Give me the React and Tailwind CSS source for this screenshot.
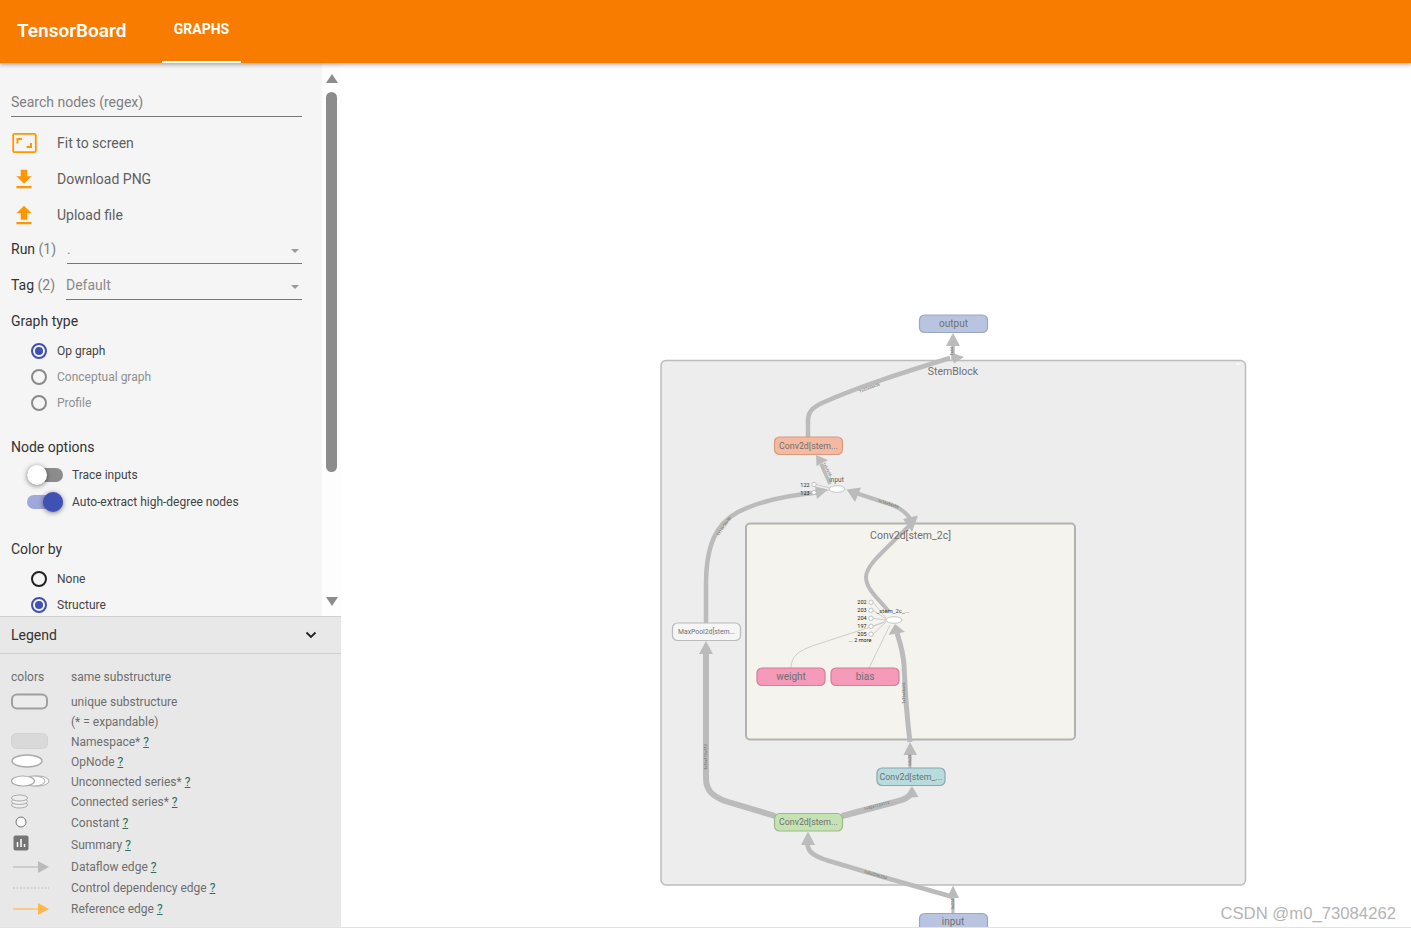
import React from "react";

const font = { fontFamily: "Roboto, sans-serif" };

function Radio({ label, checked, dark, muted, className = "" }) {
  const ring = checked ? "border-[#3f51b5]" : dark ? "border-[#222222]" : "border-[#8a8a8a]";
  return (
    <div className={"flex items-center h-[26px] pl-[20px] " + className}>
      <span className={"w-4 h-4 rounded-full border-2 flex items-center justify-center " + ring}>
        {checked && <span className="w-2 h-2 rounded-full bg-[#3f51b5]" />}
      </span>
      <span className={"ml-[10px] text-xs " + (muted ? "text-[#8f8f8f]" : "text-[#444444]")}>{label}</span>
    </div>
  );
}

function Toggle({ label, on }) {
  return (
    <div className="flex items-center h-[27px] pl-[16px]">
      <span className={"relative w-9 h-[14px] rounded-full " + (on ? "bg-[#9fa8da]" : "bg-[#8c8c8c]")}>
        <span className={"absolute top-[-3px] w-5 h-5 rounded-full shadow-[0_1px_5px_rgba(0,0,0,0.5)] " + (on ? "left-4 bg-[#3f51b5]" : "left-0 bg-white")} />
      </span>
      <span className="ml-[9px] text-xs text-[#444444]">{label}</span>
    </div>
  );
}

function Caret() {
  return <span className="absolute right-[3px] top-[13px] w-0 h-0 border-x-[4px] border-x-transparent border-t-[4px] border-t-[#9a9a9a]" />;
}

function Select({ name, count, value, widthClass }) {
  return (
    <div className="flex items-start h-9">
      <span className="mt-[6px] text-sm text-[#333333] whitespace-nowrap">{name} <span className="text-[#808080]">({count})</span></span>
      <div className={"relative ml-auto mt-[3px] h-[28px] border-b border-[#777777] text-sm text-[#8a8a8a] pt-[3px] " + widthClass}>
        {value}
        <Caret />
      </div>
    </div>
  );
}

function ActionRow({ icon, label }) {
  return (
    <div className="flex items-center h-9">
      <span className="w-[26px] mr-[20px] flex justify-center">{icon}</span>
      <span className="text-sm text-[#5f5f5f]">{label}</span>
    </div>
  );
}

const Q = () => <span className="underline text-[#2f6f57]">?</span>;

function LegendRow({ icon, children, className = "" }) {
  return (
    <div className={"flex items-center h-5 " + className}>
      <span className="w-[60px] h-5 flex items-center shrink-0">{icon}</span>
      <span className="text-xs text-[#6e6e6e]">{children}</span>
    </div>
  );
}

const S = ({ children }) => <svg width="40" height="20" viewBox="0 0 40 20" className="overflow-visible">{children}</svg>;

function Node({ x, y, w = 68, h = 17.5, fill, stroke, text, size = 9, color = "#707070" }) {
  return (
    <g>
      <rect x={x} y={y} width={w} height={h} rx="5" fill={fill} stroke={stroke} strokeWidth="1.2" />
      <text x={x + w / 2} y={y + h / 2 + size * 0.35} textAnchor="middle" fontSize={size} fill={color}>{text}</text>
    </g>
  );
}

function EdgeLabel({ x, y, r, text, size = 4 }) {
  return <text x={x} y={y} textAnchor="middle" fontSize={size} fill="#666666" transform={`rotate(${r} ${x} ${y})`}>{text}</text>;
}

function Small({ cx, cy, label, lx, toX, toY }) {
  return (
    <g>
      <line x1={cx + 2} y1={cy} x2={toX} y2={toY} stroke="#c4c4c4" strokeWidth="0.8" />
      <circle cx={cx} cy={cy} r="2.2" fill="#ffffff" stroke="#aaaaaa" strokeWidth="0.7" />
      <text x={lx} y={cy + 2} textAnchor="middle" fontSize="5.5" fill="#222222">{label}</text>
    </g>
  );
}

function Graph() {
  const e = { fill: "none", stroke: "#bbbbbb", strokeLinejoin: "round" };
  return (
    <svg viewBox="341 63 1070 864" className="w-full h-full block" style={{ fontFamily: "Roboto, sans-serif" }}>
      <rect x="661" y="360.5" width="584.5" height="524.5" rx="5" fill="#ededed" stroke="#bcbcbc" strokeWidth="1.5" />
      <rect x="746" y="523.5" width="329" height="216" rx="4" fill="#f4f3ee" stroke="#b3b3ad" strokeWidth="2" />
      <line x1="1236" y1="364" x2="1240" y2="364" stroke="#ffffff" />
      <line x1="1066" y1="508" x2="1070" y2="508" stroke="#ffffff" opacity="0" />

      {/* thin reference edges */}
      <path d="M791 668 C791 655 800 651 812 646 L884 622.5" fill="none" stroke="#cfcfca" strokeWidth="1" />
      <path d="M869 668 L890 625" fill="none" stroke="#cfcfca" strokeWidth="1" />

      {/* dataflow edges */}
      <path d="M953 914 L953 897" {...e} strokeWidth="3" />
      <polygon points="953,885.5 947,898 959,898" fill="#bbbbbb" />
      <path d="M953 897 L883 877 L826 860 C812 855 807 851 807.5 842" {...e} strokeWidth="4.5" />
      <polygon points="808,831.5 801,845 815,845" fill="#bbbbbb" />
      <path d="M842 816 L895 802 C902 800 907 799 911 794" {...e} strokeWidth="6" />
      <polygon points="912,786 904.5,798 918.5,797" fill="#bbbbbb" />
      <path d="M775 816 L725 801 C712 796 706 790 706 778 L706 652" {...e} strokeWidth="6" />
      <polygon points="706,641 699,654 713,654" fill="#bbbbbb" />
      <path d="M910 768 L910 753" {...e} strokeWidth="3" />
      <polygon points="910,742 903.5,755 917,755" fill="#bbbbbb" />
      <path d="M910 742 C906 710 905 690 904 665 C903 650 899 640 897 633" {...e} strokeWidth="5" />
      <polygon points="895,624 888.5,635 905,632" fill="#bbbbbb" />
      <path d="M889 612 C880 600 866 590 866 577 C866 565 885 550 911 524" {...e} strokeWidth="4" />
      <polygon points="918,515.5 903,519 912,532" fill="#bbbbbb" />
      <path d="M912 521 C905 510 897 506 880 501 L856 493" {...e} strokeWidth="4" />
      <polygon points="846.5,489.5 861,487.5 855,502" fill="#bbbbbb" />
      <path d="M706 623 L706 585 C706 545 716 524 738 512 C760 501 790 495 818 492.5" {...e} strokeWidth="4.5" />
      <polygon points="828,489.5 815,486.5 817,499" fill="#bbbbbb" />
      <path d="M830 484 L821 464" {...e} strokeWidth="3.5" />
      <polygon points="816,455 816.5,466 828,460" fill="#bbbbbb" />
      <path d="M808 437 L808 420 C808 412 812 408 822 403 C860 386 905 372 950 358" {...e} strokeWidth="4.5" />
      <polygon points="964,357 951,352.5 954,363.5" fill="#bbbbbb" />
      <path d="M953 360 L953 345" {...e} strokeWidth="3.5" />
      <polygon points="953,333 946,346 960,346" fill="#bbbbbb" />

      {/* group titles above edges */}
      <text x="953" y="374.5" textAnchor="middle" fontSize="10.5" fill="#707070">StemBlock</text>
      <text x="910.5" y="538.5" textAnchor="middle" fontSize="10.5" fill="#707070">Conv2d[stem_2c]</text>

      {/* edge labels */}
      <EdgeLabel x="953" y="351" r={-90} text="1x64" />
      <EdgeLabel x="870" y="389" r={-20} text="1x32x56x56" />
      <EdgeLabel x="826" y="470" r={62} text="1x64x56" />
      <EdgeLabel x="888" y="505" r={18} text="1x16x56x56" />
      <EdgeLabel x="725" y="527" r={-55} text="1x16x56x56" />
      <EdgeLabel x="707" y="757" r={-90} text="1x16x112x112" />
      <EdgeLabel x="877" y="807" r={-15} text="1x32x112x112" />
      <EdgeLabel x="875" y="876" r={17} text="1x3x224x224" />
      <EdgeLabel x="954" y="904" r={-90} text="3x224" />
      <EdgeLabel x="911" y="760" r={-90} text="64x28" />
      <EdgeLabel x="905" y="693" r={-90} text="1x16x56x56" />

      {/* op nodes */}
      <Small cx={814} cy={484.5} label="122" lx={805} toX={830} toY={488} />
      <Small cx={814} cy={492.5} label="123" lx={805} toX={830} toY={490} />
      <ellipse cx="837" cy="489" rx="8" ry="3.3" fill="#ffffff" stroke="#bbbbbb" strokeWidth="0.8" />
      <text x="836.5" y="481.5" textAnchor="middle" fontSize="6.5" fill="#555555">input</text>

      <Small cx={871} cy={602.3} label="202" lx={862} toX={886} toY={618} />
      <Small cx={871} cy={610.3} label="203" lx={862} toX={886} toY={619} />
      <Small cx={871} cy={618.3} label="204" lx={862} toX={886} toY={620} />
      <Small cx={871} cy={626.3} label="197" lx={862} toX={886} toY={621} />
      <Small cx={871} cy={634.2} label="205" lx={862} toX={886} toY={622} />
      <text x="860" y="642" textAnchor="middle" fontSize="5.5" fill="#222222">... 2 more</text>
      <ellipse cx="894" cy="620" rx="8" ry="3.3" fill="#ffffff" stroke="#bbbbbb" strokeWidth="0.8" />
      <text x="893" y="612.5" textAnchor="middle" fontSize="6" fill="#444444">_stem_2c_...</text>

      {/* nodes */}
      <Node x={919.5} y={315} fill="#b9c5e0" stroke="#9aa7c4" text="output" size={10} />
      <Node x={774.5} y={437} fill="#f4b9a0" stroke="#d99a7f" text="Conv2d[stem..." size={8.8} />
      <Node x={672.5} y={623} fill="#f5f5f5" stroke="#bbbbbb" text="MaxPool2d[stem..." size={6.8} />
      <Node x={757} y={668} fill="#f59ab9" stroke="#d17f9b" text="weight" size={10} />
      <Node x={831} y={668} fill="#f59ab9" stroke="#d17f9b" text="bias" size={10} />
      <Node x={877} y={768} fill="#b8dbde" stroke="#88a8aa" text="Conv2d[stem_..." size={8.8} />
      <Node x={774.5} y={813.5} fill="#c5e2b3" stroke="#9bba8a" text="Conv2d[stem..." size={8.8} />
      <rect x="919.5" y="913.5" width="68" height="20" rx="5" fill="#b9c5e0" stroke="#9aa7c4" strokeWidth="1.2" />
      <text x="953" y="925" textAnchor="middle" fontSize="10" fill="#707070">input</text>
    </svg>
  );
}

export default function App() {
  return (
    <div className="relative h-[931px] w-full overflow-hidden bg-white flex flex-col" style={font}>
      <header className="relative z-10 h-[63px] shrink-0 bg-[#f77c00] shadow-[0_2px_4px_rgba(0,0,0,0.3)] flex items-stretch text-white">
        <div className="ml-[17px] w-[145px] flex items-center text-[19px] font-semibold">TensorBoard</div>
        <div className="relative w-[79px] flex items-center justify-center text-sm font-bold pb-[3px] border-b-2 border-white">GRAPHS</div>
      </header>

      <div className="flex flex-1 min-h-0">
        <aside className="w-[341px] shrink-0 flex flex-col bg-[#e8e8e8]">
          <div className="h-[553px] shrink-0 flex bg-[#f5f5f5] overflow-hidden">
            <div className="w-[322px] shrink-0 pl-[11px] pr-[20px] pt-[21px]">
              <div className="h-[33px] border-b border-[#777777] text-sm text-[#808080] flex items-center pt-[4px]">Search nodes (regex)</div>
              <div className="pt-[8px]">
                <ActionRow label="Fit to screen" icon={
                  <svg width="26" height="22" viewBox="0 0 26 22" fill="none" stroke="#ff9800">
                    <rect x="2.2" y="1.8" width="22.6" height="18.4" rx="1.5" strokeWidth="1.8" />
                    <path d="M11 7H6.5v4.5M15.5 15H20v-4" strokeWidth="2" />
                  </svg>} />
                <ActionRow label="Download PNG" icon={
                  <svg width="27" height="27" viewBox="0 0 24 24" fill="#ff9800"><path d="M19 9h-4V3H9v6H5l7 7 7-7zM5 18v2h14v-2H5z" /></svg>} />
                <ActionRow label="Upload file" icon={
                  <svg width="27" height="27" viewBox="0 0 24 24" fill="#ff9800"><path d="M9 16h6v-6h4l-7-7-7 7h4zm-4 2h14v2H5z" /></svg>} />
              </div>
              <Select name="Run" count="1" value="." widthClass="w-[235px]" />
              <Select name="Tag" count="2" value="Default" widthClass="w-[236px]" />
              <div className="h-9 flex items-center text-sm text-[#333333] mt-[-2px]">Graph type</div>
              <div className="mt-[-1px]">
                <Radio label="Op graph" checked />
                <Radio label="Conceptual graph" muted />
                <Radio label="Profile" muted />
              </div>
              <div className="h-9 mt-[13px] flex items-center text-sm text-[#333333]">Node options</div>
              <div className="mt-[-4px]">
                <Toggle label="Trace inputs" />
                <Toggle label="Auto-extract high-degree nodes" on />
              </div>
              <div className="h-9 mt-[16px] flex items-center text-sm text-[#333333]">Color by</div>
              <div className="mt-[-1px]">
                <Radio label="None" dark />
                <Radio label="Structure" checked />
              </div>
            </div>
            <div className="relative w-[19px] bg-[#fdfdfd]">
              <span className="absolute left-[3.5px] top-[11px] w-0 h-0 border-x-[6.5px] border-x-transparent border-b-[9px] border-b-[#8c8c8c]" />
              <span className="absolute left-[4px] top-[29px] w-[11px] h-[380px] rounded-full bg-[#8c8c8c]" />
              <span className="absolute left-[3.5px] top-[534px] w-0 h-0 border-x-[6.5px] border-x-transparent border-t-[9px] border-t-[#8c8c8c]" />
            </div>
          </div>

          <div className="h-[38px] shrink-0 border-y border-[#cfcfcf] bg-[#e8e8e8] flex items-center justify-between pl-[11px] pr-[24px]">
            <span className="text-sm text-[#333333]">Legend</span>
            <svg width="12" height="8" viewBox="0 0 12 8" fill="none" stroke="#222222" strokeWidth="1.8"><path d="M1.5 1.5 6 6l4.5-4.5" /></svg>
          </div>

          <div className="pl-[11px] pt-[13px]">
            <LegendRow icon={<span className="text-xs text-[#6e6e6e]">colors</span>}>same substructure</LegendRow>
            <LegendRow className="mt-[5px]" icon={<S><rect x="1" y="2.5" width="35" height="14" rx="5" fill="#ececec" stroke="#a0a0a0" strokeWidth="2" /></S>}>unique substructure</LegendRow>
            <LegendRow icon={null}>(* = expandable)</LegendRow>
            <LegendRow icon={<S><rect x="0.5" y="1.5" width="36" height="15" rx="5" fill="#d9d9d9" stroke="#d2d2d2" /></S>}>Namespace* <Q /></LegendRow>
            <LegendRow icon={<S><ellipse cx="16" cy="9" rx="15" ry="6" fill="#ffffff" stroke="#aaaaaa" strokeWidth="1.5" /></S>}>OpNode <Q /></LegendRow>
            <LegendRow icon={<S>
              <ellipse cx="27" cy="9" rx="11" ry="5" fill="#ffffff" stroke="#aaaaaa" />
              <ellipse cx="23" cy="9" rx="11" ry="5" fill="#ffffff" stroke="#aaaaaa" />
              <ellipse cx="12" cy="9" rx="11.5" ry="5" fill="#ffffff" stroke="#aaaaaa" strokeWidth="1.2" />
            </S>}>Unconnected series* <Q /></LegendRow>
            <LegendRow icon={<S>
              <ellipse cx="8.5" cy="13" rx="8" ry="3" fill="#eeeeee" stroke="#aaaaaa" />
              <ellipse cx="8.5" cy="9.5" rx="8" ry="3" fill="#eeeeee" stroke="#aaaaaa" />
              <ellipse cx="8.5" cy="6" rx="8" ry="3" fill="#eeeeee" stroke="#aaaaaa" />
            </S>}>Connected series* <Q /></LegendRow>
            <LegendRow className="mt-[1px]" icon={<S><circle cx="10" cy="9" r="5" fill="#ffffff" stroke="#777777" /></S>}>Constant <Q /></LegendRow>
            <LegendRow className="mt-[2px]" icon={<S>
              <rect x="2.5" y="0.5" width="15" height="15" rx="2" fill="#757575" />
              <path d="M6.5 7v5M10 4v8M13.5 9v3" stroke="#ffffff" strokeWidth="1.5" />
            </S>}>Summary <Q /></LegendRow>
            <LegendRow className="mt-[2px]" icon={<S>
              <line x1="2" y1="10" x2="30" y2="10" stroke="#bbbbbb" strokeWidth="1.2" />
              <polygon points="27,4 38,10 27,16" fill="#bbbbbb" />
            </S>}>Dataflow edge <Q /></LegendRow>
            <LegendRow className="mt-[1px]" icon={<S><line x1="2" y1="10" x2="38" y2="10" stroke="#c2c2c2" strokeWidth="1" strokeDasharray="2 1.5" /></S>}>Control dependency edge <Q /></LegendRow>
            <LegendRow className="mt-[1px]" icon={<S>
              <line x1="2" y1="10" x2="30" y2="10" stroke="#ffb74d" strokeWidth="1.2" />
              <polygon points="27,4 38,10 27,16" fill="#ffb74d" />
            </S>}>Reference edge <Q /></LegendRow>
          </div>
        </aside>

        <main className="flex-1 min-w-0 bg-white">
          <Graph />
        </main>
      </div>

      <div className="h-[4px] shrink-0 bg-white border-t border-[#e2e2e2]" />
      <div className="absolute right-[15px] top-[904px] text-[16.7px] leading-5 text-[#b4b4b4]" style={{ fontFamily: '"Liberation Sans", sans-serif' }}>CSDN @m0_73084262</div>
    </div>
  );
}
